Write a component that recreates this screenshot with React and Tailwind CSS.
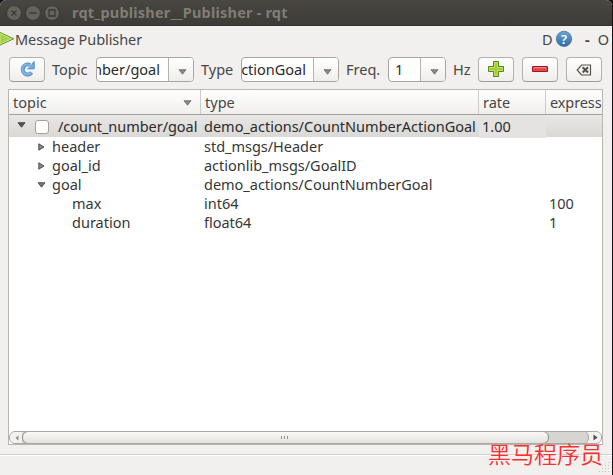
import React from "react";

const button =
  "flex h-[25px] w-9 shrink-0 items-center justify-center rounded-[4px] border border-[#b5b1ab] border-b-[#9f9b95] bg-linear-to-b from-white to-[#efeeec]";

function Label({ className = "", children }) {
  return <span className={`block shrink-0 whitespace-pre ${className}`}>{children}</span>;
}

function Down({ className = "", fill = "#8b8883", stroke = "#6b6863" }) {
  return (
    <svg className={`shrink-0 ${className}`} width="9" height="6" viewBox="0 0 9 6">
      <path d="M1 .7h7L4.5 5.2z" fill={fill} stroke={stroke} strokeWidth=".8" />
    </svg>
  );
}

function Right() {
  return (
    <svg className="shrink-0" width="7" height="8" viewBox="0 0 7 8">
      <path d="M.8.8v6.4L6 4z" fill="#8c8984" stroke="#45433f" strokeWidth=".9" />
    </svg>
  );
}

function Combo({ className, field, children }) {
  return (
    <div className={`flex h-[25px] shrink-0 overflow-hidden rounded-[4px] border border-[#aaa69f] bg-white text-[#2b2b2b] ${className}`}>
      <div className={`flex min-w-0 flex-1 items-center overflow-hidden ${field}`}>{children}</div>
      <div className="flex w-[25px] shrink-0 items-center justify-center border-l border-[#b5b1ab] bg-linear-to-b from-white to-[#efeeec] pt-[4px] pl-[3px]">
        <Down />
      </div>
    </div>
  );
}

function WindowButton({ children }) {
  return (
    <svg width="16" height="16" viewBox="0 0 16 16" fill="none">
      <circle cx="8" cy="8" r="7.4" fill="#65635d" stroke="#34332f" strokeWidth=".7" />
      <path d={children} stroke="#3a3935" strokeWidth="1.3" />
    </svg>
  );
}

const rows = [
  { indent: "pl-[29px]", arrow: "right", topic: "header", type: "std_msgs/Header", value: "" },
  { indent: "pl-[29px]", arrow: "right", topic: "goal_id", type: "actionlib_msgs/GoalID", value: "" },
  { indent: "pl-[29px]", arrow: "down", topic: "goal", type: "demo_actions/CountNumberGoal", value: "" },
  { indent: "pl-[63px]", arrow: "", topic: "max", type: "int64", value: "100" },
  { indent: "pl-[63px]", arrow: "", topic: "duration", type: "float64", value: "1" },
];

const grid = "grid grid-cols-[192px_278px_67px_56px]";

export default function App() {
  return (
    <div className="relative h-[475px] w-[613px] overflow-hidden bg-[#15101a] font-['Noto_Sans',sans-serif] text-[14.5px] leading-[19px] text-[#474747]">
      <div className="flex h-full w-[612px] flex-col overflow-hidden rounded-t-[6px] bg-[#f1f0ee]">
        <header className="flex h-[26px] shrink-0 items-center gap-[3px] border-b border-[#353430] bg-linear-to-b from-[#484741] to-[#3c3b37] pl-[6px]">
          <WindowButton>M5.5 5.5l5 5M10.5 5.5l-5 5</WindowButton>
          <WindowButton>M4.5 8h7</WindowButton>
          <WindowButton>M5 5h6v6H5z</WindowButton>
          <Label className="pl-[9px] text-[14.5px] font-bold tracking-[0.2px] text-[#807d76]">rqt_publisher__Publisher - rqt</Label>
        </header>

        <div className="flex h-[31px] shrink-0 items-start pt-[4px]">
          <svg className="mt-px shrink-0" width="15" height="16" viewBox="0 0 15 16">
            <path d="M-1 1v13.5L13.6 7.8z" fill="#a9d04a" stroke="#4e8f18" strokeWidth="1" />
            <path d="M0 2.3v10.8L11.4 7.8z" fill="none" stroke="#d3eb92" strokeWidth=".8" />
          </svg>
          <Label className="w-[527px] tracking-[-0.08px]">Message Publisher</Label>
          <Label className="w-[13px]">D</Label>
          <svg className="shrink-0" width="18" height="17" viewBox="0 0 18 17">
            <defs>
              <linearGradient id="help" x2="0" y2="1">
                <stop stopColor="#6da5d6" />
                <stop offset="1" stopColor="#2f6ca6" />
              </linearGradient>
            </defs>
            <circle cx="9" cy="8.9" r="7.6" fill="url(#help)" stroke="#3a72a8" strokeWidth=".8" />
            <text x="9" y="13.5" textAnchor="middle" fontSize="13" fontWeight="600" fill="#fff" fontFamily="Noto Sans">?</text>
          </svg>
          <Label className="pl-[12px] font-bold">-</Label>
          <Label className="pl-[8px]">O</Label>
        </div>

        <div className="flex h-8 shrink-0 items-start pl-[9px] leading-[25px]">
          <div className={button}>
            <svg className="mb-[2px]" width="18" height="18" viewBox="0 0 18 18" fill="none">
              <path d="M13.6 12.6A5 5 0 1 1 12 5" stroke="#4d8cc8" strokeWidth="4" />
              <path d="M9.3 8.8h6.9V1.6l-2.4 2.3" fill="#78abdd" stroke="#4d8cc8" strokeLinejoin="round" />
              <path d="M13.3 12.4A5 5 0 1 1 12.8 5.8" stroke="#83b2e0" strokeWidth="2.3" />
            </svg>
          </div>
          <Label className="w-[51px] pl-[7px]">Topic</Label>
          <Combo className="w-[98px]" field="justify-end pr-[8px]"><Label>mber/goal</Label></Combo>
          <Label className="w-[47px] pl-[7px]">Type</Label>
          <Combo className="w-[98px]" field="justify-end pr-[7px]"><Label>ctionGoal</Label></Combo>
          <Label className="w-[49px] pl-[7px]">Freq.</Label>
          <Combo className="w-[58px]" field="pl-[6px]"><Label>1</Label></Combo>
          <Label className="w-8 pl-[7px]">Hz</Label>
          <div className={button}>
            <svg className="mb-[2px]" width="18" height="18" viewBox="0 0 18 18">
              <path d="M6.5 1.5h5v5h5v5h-5v5h-5v-5h-5v-5h5z" fill="#a4cc38" stroke="#568719" />
              <path d="M7.5 2.5h3v5h5v3h-5v5h-3v-5h-5v-3h5z" fill="none" stroke="#cde77e" strokeWidth=".7" />
            </svg>
          </div>
          <div className={`${button} ml-2`}>
            <svg className="mb-px" width="18" height="8" viewBox="0 0 18 8">
              <path d="M1.5 1.5h15v5h-15z" fill="#df484c" stroke="#a8171f" />
              <path d="M2.5 2.7h13" stroke="#ed8b8b" />
            </svg>
          </div>
          <div className={`${button} ml-2`}>
            <svg width="16" height="12" viewBox="0 0 16 12" fill="none" stroke="#55524d">
              <path d="M5.5 1h9v10h-9L1.2 6z" strokeWidth="1.2" />
              <path d="M6.7 3.2l5.3 5.4M12 3.2L6.7 8.6" strokeWidth="2.1" />
            </svg>
          </div>
        </div>

        <main className="ml-2 flex h-[356px] w-[595px] shrink-0 flex-col border border-[#b9b6b0] bg-white text-[#373737]">
          <div className={`${grid} h-[25px] shrink-0 overflow-hidden border-b border-[#a6a29b] bg-linear-to-b from-white to-[#f0efed] leading-[25px] text-[#474747]`}>
            <div className="flex items-center justify-between border-r border-[#cfccc7] pr-[8px] pl-[4px]"><Label>topic</Label><Down /></div>
            <Label className="border-r border-[#cfccc7] pl-[4px]">type</Label>
            <Label className="border-r border-[#cfccc7] pl-[4px]">rate</Label>
            <Label className="pl-[4px] tracking-[-0.1px]">express</Label>
          </div>
          <div className={`${grid} h-[22px] shrink-0 bg-linear-to-b from-[#e9e7e5] to-[#dbd9d6] leading-[23px] text-[#2b2b2b]`}>
            <div className="flex items-center pl-[8px]">
              <Down className="-mt-[3px]" fill="#5b5853" stroke="#35332f" />
              <span className="ml-[9px] h-[14px] w-[14px] shrink-0 rounded-[3px] border border-[#a5a19a] bg-white" />
              <Label className="pl-[9px] tracking-[-0.05px]">/count_number/goal</Label>
            </div>
            <Label className="pl-[3px]">demo_actions/CountNumberActionGoal</Label>
            <Label className="bg-[#e5e3e1] pl-[3px]">1.00</Label>
          </div>
          {rows.map((r) => (
            <div key={r.topic} className={`${grid} h-[19px] shrink-0`}>
              <div className={`flex items-center ${r.indent}`}>
                {r.arrow && <span className="flex w-[14px] shrink-0">{r.arrow === "right" ? <Right /> : <Down className="-ml-px" fill="#77746f" stroke="#45433f" />}</span>}
                <Label>{r.topic}</Label>
              </div>
              <Label className="pl-[3px] tracking-[-0.02px]">{r.type}</Label>
              <span />
              <Label className="pl-[3px]">{r.value}</Label>
            </div>
          ))}
          <div className="flex-1" />
          <div className="flex h-[13px] shrink-0 overflow-hidden rounded-[6px] border border-[#aaa7a2] bg-[#d7d5d2]">
            <div className="flex w-[12px] shrink-0 items-center justify-center bg-[#f2f1ef] pl-[2px]">
              <svg width="4" height="6" viewBox="0 0 4 6"><path d="M3.5.5v5L.5 3z" fill="#8f8c87" /></svg>
            </div>
            <div className="-my-px flex w-[527px] shrink-0 items-center justify-center gap-[2px] rounded-[6px] border border-[#8e8b86] bg-linear-to-b from-[#faf9f8] to-[#e4e2df] pr-[2px]">
              <i className="h-[3px] w-px bg-[#96938e]" /><i className="h-[3px] w-px bg-[#96938e]" /><i className="h-[3px] w-px bg-[#96938e]" />
            </div>
            <div className="flex-1 bg-[#f2f1ef]">
              <div className="-mt-px h-[13px] w-[40px] rounded-r-[6px] border-r border-[#aaa7a2] bg-[#d7d5d2]" />
            </div>
            <div className="flex w-[12px] shrink-0 items-center justify-center bg-[#f2f1ef]">
              <svg width="5" height="7" viewBox="0 0 5 7"><path d="M.5.5v6l4-3z" fill="#4c4a46" /></svg>
            </div>
          </div>
        </main>

        <footer className="mt-[9px] flex flex-1 items-end justify-end border-t border-[#d4d1cd] pr-[2px] pb-[2px] shadow-[inset_0_1px_white]">
          <svg width="11" height="11" viewBox="0 0 11 11" fill="#c9c6c1">
            <path d="M9 0h1v1H9zM6 3h1v1H6zM9 3h1v1H9zM3 6h1v1H3zM6 6h1v1H6zM9 6h1v1H9zM0 9h1v1H0zM3 9h1v1H3zM6 9h1v1H6zM9 9h1v1H9z" />
          </svg>
        </footer>
      </div>
      <div className="absolute top-[439px] left-[488px] font-['Noto_Sans_CJK_SC',sans-serif] text-[23px] leading-[28px] font-[350] whitespace-nowrap text-[#fa2f2f]">黑马程序员</div>
    </div>
  );
}
